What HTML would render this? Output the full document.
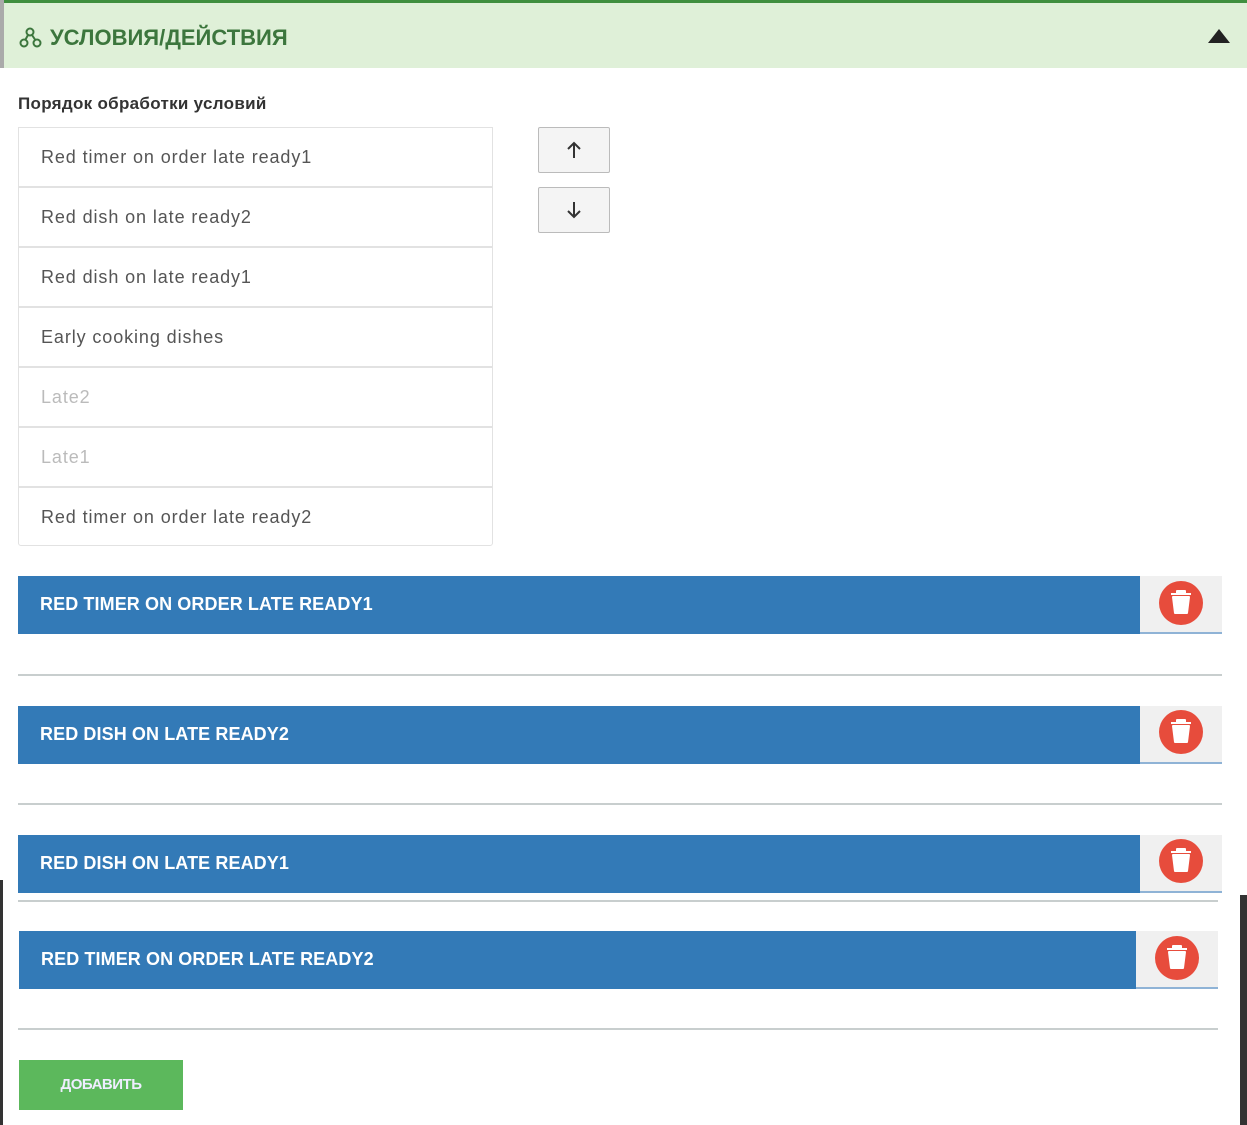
<!DOCTYPE html>
<html><head><meta charset="utf-8"><style>
body{margin:0;width:1247px;height:1125px;position:relative;background:#fff;font-family:"Liberation Sans",sans-serif;overflow:hidden}
.a{position:absolute}
.hdr{left:0;top:0;width:1247px;height:68px;background:#dff0d8;border-top:3px solid #3f8f3f;box-sizing:border-box}
.row{position:absolute;left:18px;width:475px;height:60px;border:1px solid #e2e2e2;box-sizing:border-box;font-size:18px;color:#555;line-height:58px;padding-left:22px;letter-spacing:0.9px}
.dis{color:#bbb}
.btn{position:absolute;left:538px;width:72px;height:46px;border:1px solid #bbb;background:#f4f4f4;box-sizing:border-box;border-radius:2px}
.bar{position:absolute;height:58px;background:#337ab7;color:#fff;font-weight:bold;font-size:18px;line-height:56px;padding-left:22px;box-sizing:border-box;letter-spacing:0.1px}
.del{position:absolute;width:82px;height:58px;background:#f0f0f0;border-bottom:2px solid #8fb3d6;box-sizing:border-box}
.ln{position:absolute;height:2px;background:#c8cece}
</style></head><body>
<div class="a hdr"></div>
<div class="a" style="left:0;top:0;width:4px;height:68px;background:#aaa"></div>
<svg class="a" style="left:19px;top:27px" width="24" height="22" viewBox="0 0 24 22"><g fill="none" stroke="#3c763d" stroke-width="2"><circle cx="11" cy="5" r="3.5"/><circle cx="5" cy="16" r="3.5"/><circle cx="18" cy="16" r="3.5"/><path d="M9 8 L6.5 12.5 M13 8 L16 12.5"/></g></svg>
<div class="a" style="left:50px;top:25px;font-size:22px;font-weight:bold;color:#3c763d">УСЛОВИЯ/ДЕЙСТВИЯ</div>
<svg class="a" style="left:1208px;top:28px" width="22" height="16"><path d="M0 15 L11 1 L22 15Z" fill="#222"/></svg>
<div class="a" style="left:18px;top:94px;font-size:17px;font-weight:bold;color:#333;letter-spacing:0.3px">Порядок обработки условий</div>
<div class="row" style="top:127px">Red timer on order late ready1</div>
<div class="row" style="top:187px">Red dish on late ready2</div>
<div class="row" style="top:247px">Red dish on late ready1</div>
<div class="row" style="top:307px">Early cooking dishes</div>
<div class="row dis" style="top:367px">Late2</div>
<div class="row dis" style="top:427px">Late1</div>
<div class="row" style="top:487px;height:59px;border-radius:0 0 3px 3px">Red timer on order late ready2</div>
<div class="btn" style="top:127px"><svg width="70" height="44"><path d="M35 15 V30 M29 21 L35 15 L41 21" fill="none" stroke="#333" stroke-width="2"/></svg></div>
<div class="btn" style="top:187px"><svg width="70" height="44"><path d="M35 14 V29 M29 23 L35 29 L41 23" fill="none" stroke="#333" stroke-width="2"/></svg></div>

<div class="bar" style="left:18px;top:576px;width:1122px">RED TIMER ON ORDER LATE READY1</div>
<div class="del" style="left:1140px;top:576px"></div>
<div class="ln" style="left:18px;top:674px;width:1204px"></div>
<div class="bar" style="left:18px;top:706px;width:1122px">RED DISH ON LATE READY2</div>
<div class="del" style="left:1140px;top:706px"></div>
<div class="ln" style="left:18px;top:803px;width:1204px"></div>
<div class="bar" style="left:18px;top:835px;width:1122px">RED DISH ON LATE READY1</div>
<div class="del" style="left:1140px;top:835px"></div>
<div class="ln" style="left:18px;top:900px;width:1200px"></div>
<div class="bar" style="left:19px;top:931px;width:1117px">RED TIMER ON ORDER LATE READY2</div>
<div class="del" style="left:1136px;top:931px"></div>
<div class="ln" style="left:18px;top:1028px;width:1200px"></div>
<div class="a" style="left:1240px;top:895px;width:7px;height:230px;background:#333"></div>
<div class="a" style="left:0;top:880px;width:3px;height:245px;background:#333"></div>

<svg class="a" style="left:1158px;top:580px" width="46" height="46"><circle cx="23" cy="23" r="22" fill="#e74c3c"/><path d="M13 14 H33 M19 14 V11 H27 V14 M15 17 H31 L29 33 H17 Z" fill="#fff" stroke="#fff" stroke-width="2" stroke-linejoin="round"/></svg>
<svg class="a" style="left:1158px;top:709px" width="46" height="46"><circle cx="23" cy="23" r="22" fill="#e74c3c"/><path d="M13 14 H33 M19 14 V11 H27 V14 M15 17 H31 L29 33 H17 Z" fill="#fff" stroke="#fff" stroke-width="2" stroke-linejoin="round"/></svg>
<svg class="a" style="left:1158px;top:838px" width="46" height="46"><circle cx="23" cy="23" r="22" fill="#e74c3c"/><path d="M13 14 H33 M19 14 V11 H27 V14 M15 17 H31 L29 33 H17 Z" fill="#fff" stroke="#fff" stroke-width="2" stroke-linejoin="round"/></svg>
<svg class="a" style="left:1154px;top:935px" width="46" height="46"><circle cx="23" cy="23" r="22" fill="#e74c3c"/><path d="M13 14 H33 M19 14 V11 H27 V14 M15 17 H31 L29 33 H17 Z" fill="#fff" stroke="#fff" stroke-width="2" stroke-linejoin="round"/></svg>

<div class="a" style="left:19px;top:1060px;width:164px;height:50px;background:#5cb85c;color:#eef;font-weight:bold;font-size:15px;line-height:50px;text-align:center;letter-spacing:-0.5px">ДОБАВИТЬ</div>
</body></html>
